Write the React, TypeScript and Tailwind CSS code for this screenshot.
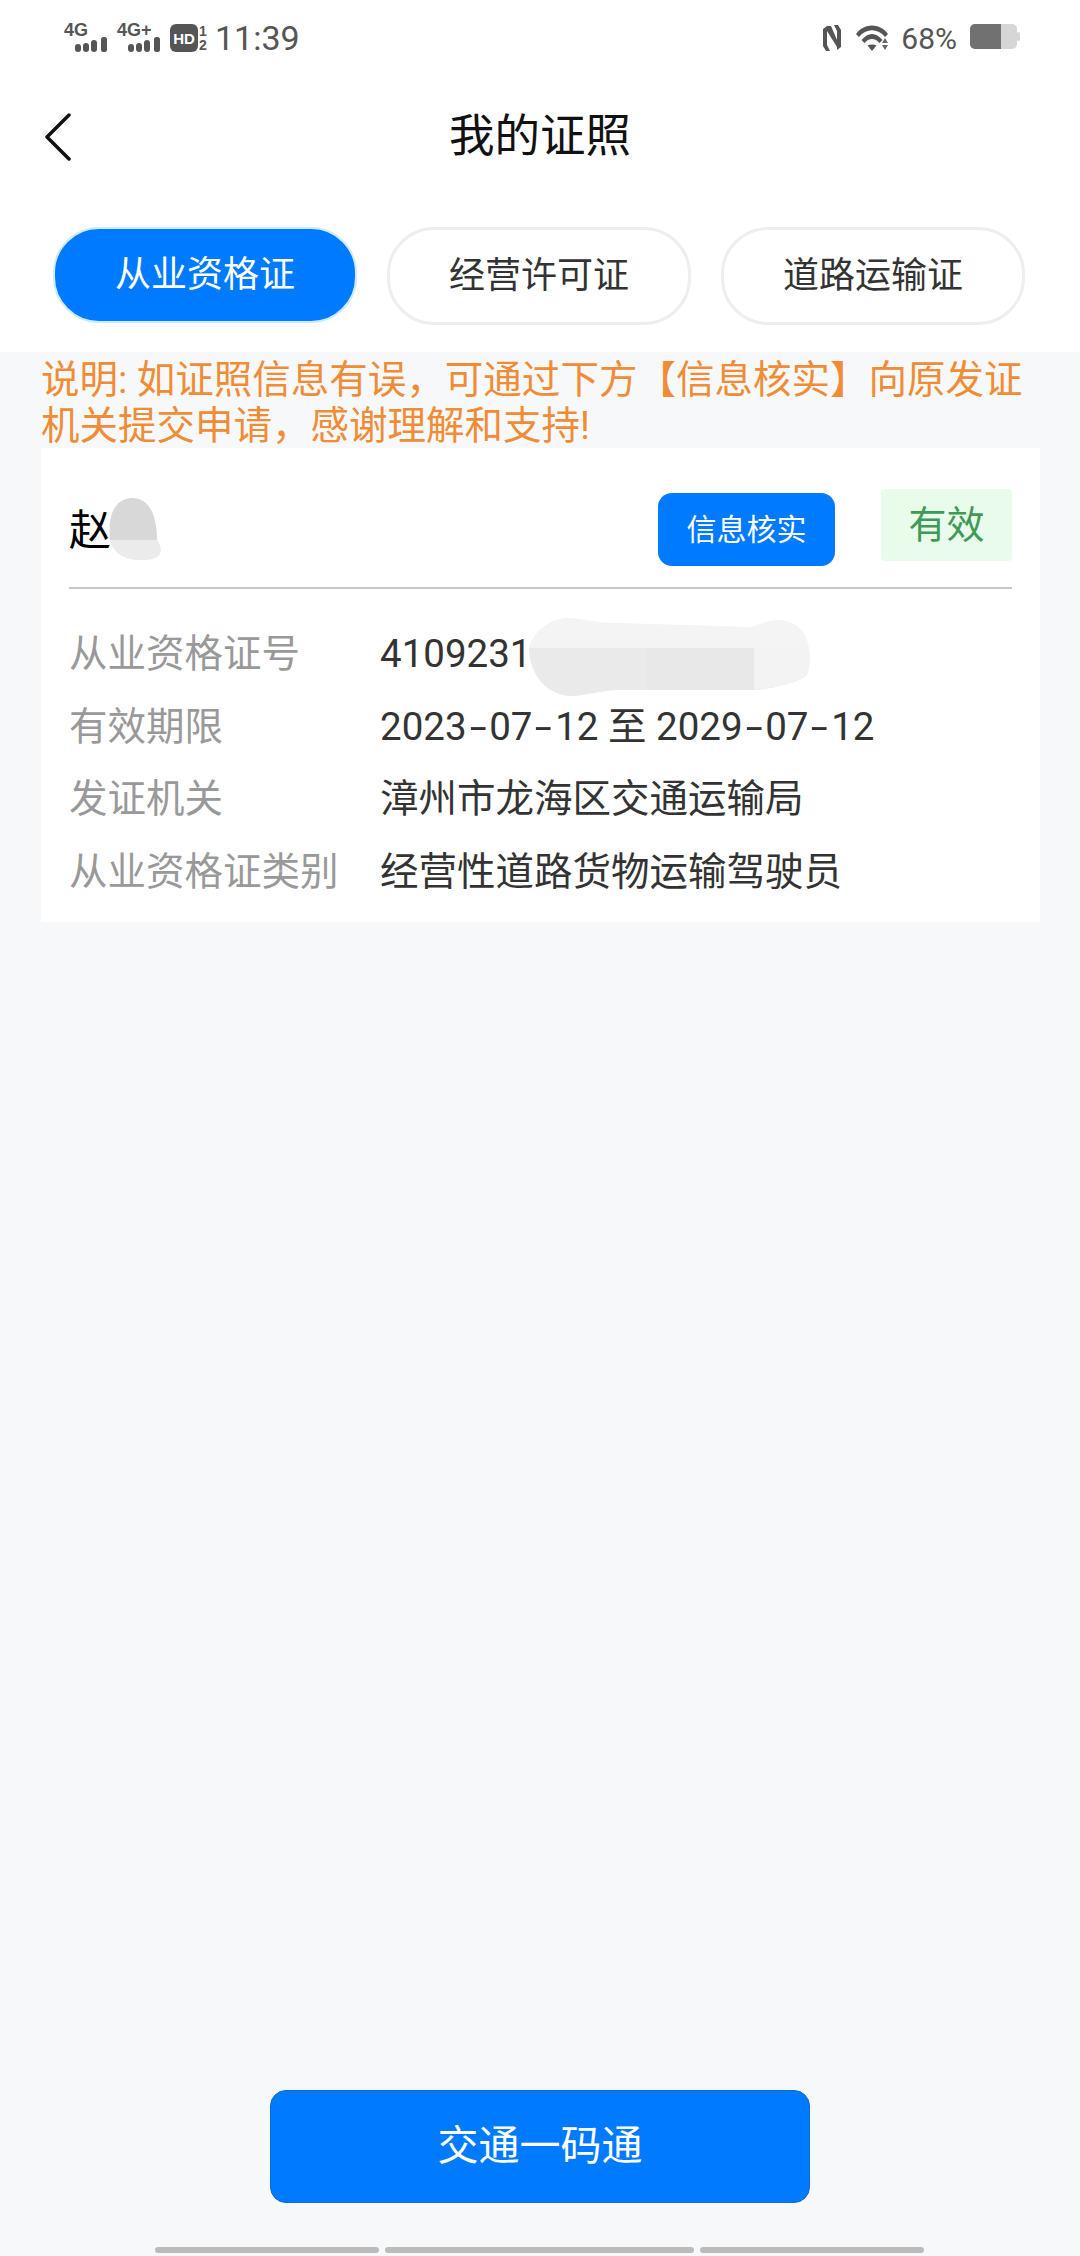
const cjk = "font-['Roboto','Noto_Sans_CJK_SC',sans-serif]";

// the hyphens in the reference's dates are longer than Roboto's
function Dash() {
  return <span className="mx-[6px] inline-block scale-x-[1.6]">-</span>;
}

const rows = [
  { label: "从业资格证号", value: <>41092310</> },
  {
    label: "有效期限",
    value: (
      <>
        2023<Dash />07<Dash />12 至 2029<Dash />07<Dash />12
      </>
    ),
  },
  { label: "发证机关", value: <>漳州市龙海区交通运输局</> },
  { label: "从业资格证类别", value: <>经营性道路货物运输驾驶员</> },
];

function SignalBars() {
  return (
    <svg width="33" height="15" viewBox="0 0 33 15" className="absolute left-[11px] top-[13px]">
      <rect x="0" y="7" width="6" height="8" rx="3" fill="#555" />
      <rect x="8" y="6" width="6" height="9" rx="3" fill="#555" />
      <rect x="16" y="3" width="6" height="12" rx="3" fill="#555" />
      <rect x="26" y="0" width="6" height="15" rx="2.5" fill="#555" />
    </svg>
  );
}

function Signal({ label }: { label: string }) {
  return (
    <div className="relative h-[30px] w-[53px]">
      <span className="absolute left-0 top-[-4px] text-[18px] leading-[20px] font-bold text-[#555] font-['Liberation_Sans',sans-serif]">
        {label}
      </span>
      <SignalBars />
    </div>
  );
}

function StatusBar() {
  return (
    <div className="flex h-[80px] items-start justify-between pt-[24px] pl-[64px] pr-[60px]">
      <div className="flex items-start">
        <Signal label="4G" />
        <Signal label="4G+" />
        <div className="flex h-[28px] w-[28px] items-center justify-center rounded-[6px] bg-[#555] text-[15px] leading-none font-bold text-white font-['Liberation_Sans',sans-serif]">
          HD
        </div>
        <div className="ml-[1px] flex w-[11px] flex-col text-[14px] leading-[14px] font-bold text-[#555] font-['Liberation_Sans',sans-serif]">
          <span>1</span>
          <span>2</span>
        </div>
        <span className="ml-[5px] mt-[-3px] text-[34px] leading-[34px] text-[#555] font-['Roboto',sans-serif]">11:39</span>
      </div>
      <div className="flex items-start">
        <svg width="18" height="27" viewBox="0 0 18 27" className="mt-[1px]">
          <path d="M0 4L4 1V20L7 26H3L0 21Z" fill="#555" />
          <path d="M18 22L14 25V6L11 0H15L18 5Z" fill="#555" />
          <path d="M4 1H8L14 15V22L4 6Z" fill="#555" />
        </svg>
        <svg width="34" height="26" viewBox="0 0 34 26" className="ml-[15px] mt-[1px]">
          <path d="M0 9C8 -2.5 24 -2.5 32 9L29 12C22 3 10 3 3 12Z" fill="#555" />
          <path d="M5.5 15C12 7 20 7 26.5 15L23.5 18C19 12.5 13 12.5 8.5 18Z" fill="#555" />
          <path d="M11.5 20.5C14 19 18 19 20.5 20.5L16 26Z" fill="#555" />
          <path d="M29 13l3 5h-6zM29 25l-3-5h6z" fill="#666" />
        </svg>
        <span className="ml-[11px] mt-[1px] text-[30px] leading-[28px] text-[#555] font-['Roboto',sans-serif]">68%</span>
        <svg width="50" height="26" viewBox="0 0 50 26" className="ml-[13px]">
          <rect x="0" y="0" width="47" height="25" rx="5" fill="#d6d6d6" />
          <path d="M5 0h26v25H5a5 5 0 0 1-5-5V5a5 5 0 0 1 5-5z" fill="#717171" />
          <rect x="47" y="8" width="3" height="9" rx="1.5" fill="#d6d6d6" />
        </svg>
      </div>
    </div>
  );
}

function Tab({ label, active }: { label: string; active?: boolean }) {
  return (
    <div
      className={
        active
          ? "flex h-[96px] w-[304px] items-center justify-center rounded-[46px] border-2 border-[#cdeaff] bg-[#007aff] text-[36px] text-white"
          : "flex h-[98px] w-[304px] items-center justify-center rounded-[47px] border-[3px] border-[#eeeeee] bg-white text-[36px] text-[#333333]"
      }
    >
      {label}
    </div>
  );
}

export default function App() {
  return (
    <div className={`flex h-[2256px] w-[1080px] flex-col overflow-hidden bg-[#f6f8fa] ${cjk}`}>
      <div className="h-[352px] bg-white">
        <StatusBar />
        <div className="relative flex h-[118px] items-center justify-center pb-[4px]">
          <svg width="30" height="48" viewBox="0 0 30 48" className="absolute left-[44px] top-[33px]">
            <path d="M25 2L3 24l22 22" fill="none" stroke="#111" strokeWidth="3.5" strokeLinecap="round" strokeLinejoin="round" />
          </svg>
          <span className="text-[45.5px] leading-[60px] text-[#111]">我的证照</span>
        </div>
        <div className="mt-[29px] flex items-start gap-[30px] pl-[53px]">
          <Tab label="从业资格证" active />
          <Tab label="经营许可证" />
          <Tab label="道路运输证" />
        </div>
      </div>

      <p className="h-[96px] pl-[41px] pt-[5px] pr-[40px] text-[38.5px] leading-[46px] text-[#f08c35]">
        说明: 如证照信息有误，可通过下方【信息核实】向原发证机关提交申请，感谢理解和支持!
      </p>

      <div className="relative ml-[41px] mr-[40px] h-[474px] bg-white px-[28px]">
        <div className="flex h-[141px] items-start border-b-2 border-[#c8c8c8]">
          <span className="mt-[55px] text-[42px] leading-[56px] text-black">赵</span>
          <div className="ml-auto mt-[45px] flex h-[73px] w-[177px] items-center justify-center rounded-[14px] bg-[#007aff] text-[30px] text-white">
            信息核实
          </div>
          <div className="ml-[46px] mt-[41px] flex h-[72px] w-[131px] items-center justify-center rounded-[4px] bg-[#e9fcec] text-[38px] text-[#3f9a55]">
            有效
          </div>
        </div>
        <div className="pt-[29px]">
          {rows.map((row) => (
            <div key={row.label} className="flex h-[72.5px] items-center text-[38.5px]">
              <span className="w-[311px] text-[#999999]">{row.label}</span>
              <span className="text-[#333333]">{row.value}</span>
            </div>
          ))}
        </div>
        {/* smudges covering the name and certificate number */}
        <svg width="56" height="64" viewBox="0 0 56 64" className="absolute left-[68px] top-[49px]">
          <path d="M1 43C-1 22 3 3 22 1c16-1 26 14 26 42z" fill="#d8d8d8" />
          <path d="M1 43h47c7 10 6 20-14 20C14 64 3 54 1 43z" fill="#ebebeb" />
        </svg>
        <svg width="284" height="78" viewBox="0 0 284 78" className="absolute left-[485px] top-[170px]">
          <path d="M3 30C6 15 25 -2 46 0C65 3 80 5 94 5L225 9C235 6 245 1 255 2C270 4 280 12 283 30Z" fill="#f4f4f4" />
          <path d="M3 30H283C284 42 284 52 280 58C270 66 245 70 232 72L94 72C75 72 60 78 46 78C20 78 3 55 3 30Z" fill="#eaeaea" />
          <path d="M121 30H228V72H121Z" fill="#e8e8e8" />
          <path d="M228 30H283C284 42 284 52 280 58C270 66 245 70 228 72Z" fill="#f3f3f3" />
        </svg>
      </div>

      <div className="mt-auto flex justify-center">
        <div className="flex h-[113px] w-[540px] items-center justify-center rounded-[16px] border border-[#0a6bd6] bg-[#007aff] text-[41px] text-white">
          交通一码通
        </div>
      </div>
      <div className="mb-[3px] mt-[44px] flex gap-[6px] pl-[155px]">
        <div className="h-[6px] w-[224px] rounded-[3px] bg-[#bbbbbb]" />
        <div className="h-[6px] w-[309px] rounded-[3px] bg-[#bbbbbb]" />
        <div className="h-[6px] w-[224px] rounded-[3px] bg-[#bbbbbb]" />
      </div>
    </div>
  );
}
